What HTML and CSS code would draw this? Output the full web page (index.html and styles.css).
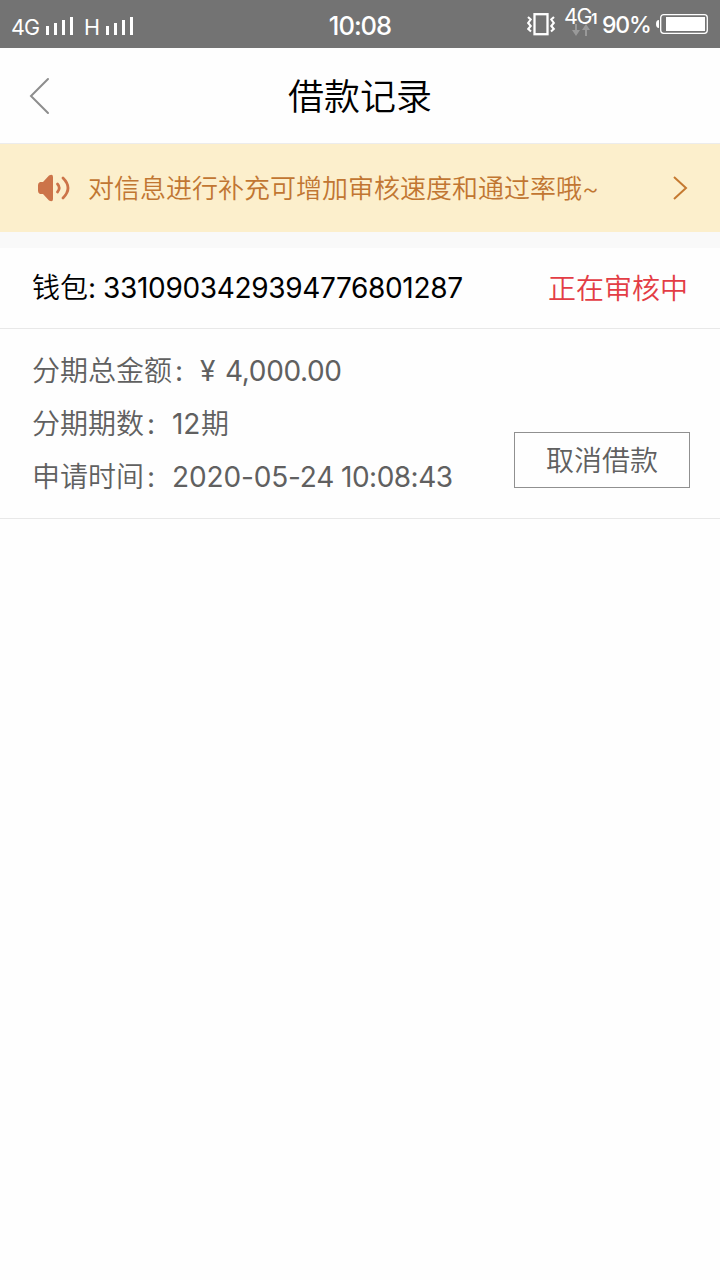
FILE: index.html
```
<!DOCTYPE html>
<html lang="zh-CN">
<head>
<meta charset="utf-8">
<title>借款记录</title>
<link rel="stylesheet" href="styles.css">
</head>
<body>
<div class="status">
  <div class="status-left">
    <span class="net">4G</span>
    <svg class="bars" width="30" height="20" viewBox="0 0 30 20"><path d="M0 9h3v9H0zM8 6h3v12H8zM16 3h3v15h-3zM24 0h3v18h-3z" fill="#fff"/></svg>
    <span class="net net-h">H</span>
    <svg class="bars" width="30" height="20" viewBox="0 0 30 20"><path d="M0 9h3v9H0zM8 6h3v12H8zM16 3h3v15h-3zM24 0h3v18h-3z" fill="#fff"/></svg>
  </div>
  <div class="time">10:08</div>
  <div class="status-right">
    <svg class="vibrate" width="30" height="24" viewBox="0 0 30 24" fill="none" stroke="#fff"><rect x="7.500" y="2.200" width="13" height="20" stroke-width="2.300"/><path d="M1 5l2.700 2.500-2.500 3.500 2.500 3-2.500 3L4 19.500M27 5l-2.700 2.500 2.500 3.500-2.500 3 2.500 3L24 19.500" stroke-width="2.100"/></svg>
    <div class="data">
      <div class="data-label"><span>4G</span><span class="sim">1</span></div>
      <svg class="arrows" width="18" height="12" viewBox="0 0 18 12" fill="#999"><path d="M3 0h2v6h3l-4 6-4-6h3zM13 12h2V6h3l-4-6-4 6h3z"/></svg>
    </div>
    <span class="percent">90%</span>
    <svg class="battery" width="53" height="22" viewBox="0 0 53 22"><path d="M3 7v8Q0 15 0 11t3-4z" fill="#fff"/><rect x="4.700" y="1.700" width="46.600" height="18.600" rx="3" fill="none" stroke="#fff" stroke-width="1.300"/><rect x="10" y="4" width="39" height="14" fill="#fff"/></svg>
  </div>
</div>
<header class="nav">
  <svg class="back" width="24" height="40" viewBox="0 0 24 40" fill="none" stroke="#8d8d8d" stroke-width="2" stroke-linecap="round"><path d="M20 3L3 20l17 17"/></svg>
  <h1 class="title">借款记录</h1>
</header>
<div class="notice">
  <svg class="speaker" width="34" height="30" viewBox="0 0 34 30" fill="#cc7449"><path d="M3 9h3l6-6.500q4-2 4 1.500v22q0 3.500-4 1.500L6 21H3q-2-1-2-3v-6q0-2 2-3z"/><path d="M20.500 11q3.500 4 0 8M26 5q10 10 0 20" fill="none" stroke="#cc7449" stroke-width="2.700" stroke-linecap="round"/></svg>
  <span class="notice-text">对信息进行补充可增加审核速度和通过率哦~</span>
  <svg class="chevron" width="16" height="26" viewBox="0 0 16 26" fill="none" stroke="#c57930" stroke-width="2"><path d="M2 2l12 11L2 24"/></svg>
</div>
<main class="record">
  <div class="record-head">
    <div class="wallet"><span>钱包<b class="head-colon">:</b></span><span class="wallet-no">3310903429394776801287</span></div>
    <span class="state">正在审核中</span>
  </div>
  <div class="record-body">
    <div class="rows">
      <div class="row"><span class="label">分期总金额</span><span class="colon">:</span><span class="yen">¥</span><span class="amount">4,000.00</span></div>
      <div class="row"><span class="label">分期期数</span><span class="colon">:</span><span class="count">12</span><span>期</span></div>
      <div class="row"><span class="label">申请时间</span><span class="colon">:</span><span class="date">2020-05-24</span><span class="clock">10:08:43</span></div>
    </div>
    <button class="cancel">取消借款</button>
  </div>
</main>
</body>
</html>
```
FILE: styles.css
```
* { box-sizing: border-box; }
body {
  margin: 0;
  background: #fefefe;
  color: #000;
  font-family: Inter, "Noto Sans CJK SC", sans-serif;
  font-weight: 350;
  font-size: 28px;
}
svg { display: block; flex: none; }
.status {
  height: 48px;
  background: #737373;
  color: #fff;
  display: grid;
  grid-template-columns: 1fr auto 1fr;
  line-height: 24px;
}
.status-left { display: flex; padding: 15px 0 0 11px; }
.net { width: 35px; font-size: 21.5px; font-weight: 400; letter-spacing: -0.8px; white-space: nowrap; }
.net-h { width: 22px; margin-left: 8px; }
.bars { margin-top: 2px; }
.time { font-size: 25.5px; font-weight: 500; padding-top: 14px; letter-spacing: -1px; }
.status-right { display: flex; justify-content: flex-end; padding-right: 11px; }
.vibrate { margin: 12px 7px 0 0; }
.data { width: 38px; padding-top: 4px; }
.data-label { display: flex; font-size: 21.5px; font-weight: 400; letter-spacing: -1.4px; height: 20px; }
.sim { font-size: 14px; font-weight: 700; padding-top: 3px; }
.arrows { margin-left: 8px; }
.percent { width: 54px; padding-top: 13px; font-size: 23px; font-weight: 500; letter-spacing: -1.2px; }
.battery { margin-top: 13px; }
.nav {
  height: 96px;
  padding-top: 1px;
  display: grid;
  grid-template-columns: 80px 1fr 80px;
  align-items: center;
  border-bottom: 1px solid #ececec;
}
.back { margin-left: 28px; }
.title { margin: 0; padding-top: 2px; font-size: 36px; font-weight: 350; line-height: 48px; text-align: center; }
.notice {
  height: 88px;
  padding: 0 32px 0 37px;
  background: #fcefcc;
  color: #c17632;
  display: flex;
  align-items: center;
}
.notice-text { flex: 1; margin-left: 17px; padding-top: 2px; font-size: 26px; line-height: 36px; white-space: nowrap; }
.record {
  border-top: 16px solid #f9f9f9;
  border-bottom: 1px solid #e8e8e8;
}
.record-head {
  height: 81px;
  padding: 0 32px;
  display: flex;
  justify-content: space-between;
  align-items: center;
  border-bottom: 1px solid #e8e8e8;
  line-height: 40px;
}
.wallet { display: flex; }
.head-colon { font-weight: 400; }
.wallet-no { margin-left: 7px; font-weight: 400; letter-spacing: -0.34px; }
.state { padding-top: 1px; color: #e33d45; }
.record-body {
  height: 189px;
  padding: 15px 30px 30px 32px;
  display: flex;
  justify-content: space-between;
  align-items: flex-end;
  color: #606060;
}
.rows { align-self: flex-start; }
.row { display: flex; height: 53px; line-height: 54px; white-space: nowrap; }
.colon { width: 28px; padding-left: 3px; font-weight: 400; }
.yen { width: 25px; font-weight: 400; }
.amount { font-weight: 400; letter-spacing: -0.35px; }
.count { width: 29px; font-weight: 400; letter-spacing: -0.2px; }
.date { width: 169px; font-weight: 400; letter-spacing: -0.15px; }
.clock { font-weight: 400; letter-spacing: -0.5px; }
.cancel {
  width: 176px;
  height: 56px;
  padding: 0 0 2px;
  border: 1px solid #909090;
  background: #fefefe;
  color: #606060;
  font: inherit;
}
```
